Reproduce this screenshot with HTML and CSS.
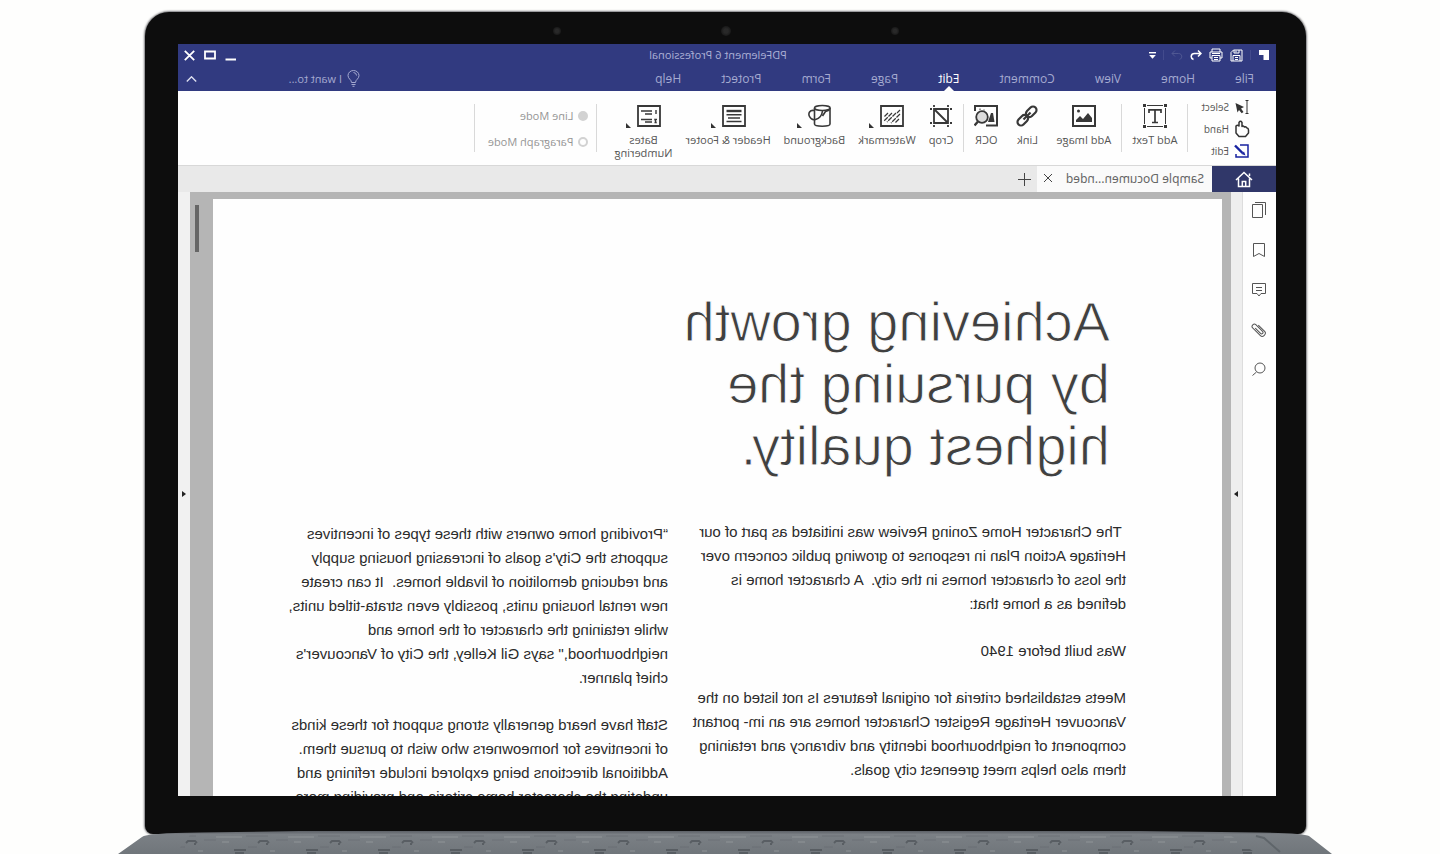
FILE: index.html
```html
<!DOCTYPE html>
<html lang="en">
<head>
<meta charset="utf-8">
<meta name="viewport" content="width=device-width, initial-scale=1">
<title>PDFelement 6 Professional</title>
<link rel="stylesheet" href="styles.css">
</head>
<body>
<main class="laptop">
  <div class="lid">
    <div class="camera"><span class="lens lens-small"></span><span class="lens"></span><span class="lens lens-small"></span></div>
    <div class="screen">
      <header class="titlebar">
        <div class="quick">
          <svg class="logo" width="12" height="12" viewBox="0 0 12 12"><path d="M1 1h10v5H1z M1 6h5.500v5H1z" fill="#fff" stroke="none"/></svg>
          <span class="rule"></span>
          <button aria-label="Save"><svg width="13" height="13" viewBox="0 0 13 13"><path d="M1 1h8.500l2.500 2.500V12H1z M3 12V6.500h7V12 M4 1v3h5V1 M7 1.500v2 M5 8.500h3M5 10.500h3"/></svg></button>
          <button aria-label="Print"><svg width="14" height="14" viewBox="0 0 14 14"><path d="M3 4V1h8v3 M3 10H1V4h12v6h-2 M3 7.500h8V13H3z M5 9.500h4M5 11.500h4 M3 5.500h8"/></svg></button>
          <button aria-label="Redo"><svg width="12" height="12" viewBox="0 0 12 12"><path d="M8 1.500 11 4.500 8 7.500 M11 4.500H4.500C.5 4.500.2 9.500 3.500 10.500" stroke-width="1.500" transform="translate(12 0) scale(-1 1)"/></svg></button>
          <button class="faint" aria-label="Undo"><svg width="12" height="12" viewBox="0 0 12 12"><path d="M8 1.500 11 4.500 8 7.500 M11 4.500H4.500C.5 4.500.2 9.500 3.500 10.500"/></svg></button>
          <span class="rule"></span>
          <button aria-label="Customize"><svg width="7" height="7" viewBox="0 0 7 7"><path d="M0 .7h7" stroke-width="1.400"/><path d="M.2 3h6.600L3.500 6.800z" fill="#fff" stroke="none"/></svg></button>
        </div>
        <h1 class="app-title">PDFelement 6 Professional</h1>
        <div class="window-controls">
          <button aria-label="Minimize"><svg width="11" height="11" viewBox="0 0 11 11"><path d="M0 9.500h10.500" stroke-width="2"/></svg></button>
          <button aria-label="Maximize"><svg width="12" height="10" viewBox="0 0 12 10"><path d="M1 1.500h10v7H1z" stroke-width="1.800"/></svg></button>
          <button aria-label="Close"><svg width="11" height="11" viewBox="0 0 11 11"><path d="M.8.8l9.400 9.400M10.200.8.8 10.200" stroke-width="1.800"/></svg></button>
        </div>
      </header>

      <nav class="menu">
        <a href="#">File</a><a href="#">Home</a><a href="#">View</a><a href="#">Comment</a><a href="#" class="active">Edit</a><a href="#">Page</a><a href="#">Form</a><a href="#">Protect</a><a href="#">Help</a>
        <label class="wish">
          <svg width="13" height="17" viewBox="0 0 13 17"><path d="M4.500 12.500C4.500 9.500 1 9 1 5.500a5.500 5 0 0 1 11 0C12 9 8.500 9.500 8.500 12.500z M4.500 14.500h4 M5.500 16.300h2 M6.500 2.500q-3 .2-3 3"/></svg>
          <input type="text" placeholder="I want to..." aria-label="I want to">
        </label>
        <button class="collapse" aria-label="Collapse ribbon"><svg width="11" height="6" viewBox="0 0 11 6"><path d="M.8 5.500 5.500.8l4.700 4.700" stroke-width="1.400"/></svg></button>
      </nav>

      <section class="ribbon">
        <div class="group modes">
          <button><svg width="16" height="14" viewBox="0 0 16 14"><path d="M1.500.5h3M1.500 13.500h3M3 .5v13" stroke="#333"/><path d="M14.500 2 6 6l3 1.500L6.500 11l1.800 1.200L11 9l1.500 2.500z" fill="#333" stroke="none" transform="translate(0 1)"/></svg>Select</button>
          <button><svg width="16" height="18" viewBox="0 0 16 18"><path d="M4.500 16.500h6.500l3-3.500V6q-1.500-1.500-3 0V2.500Q9.500.2 8 2.500v4Q6.800 5.300 5.600 7 4.300 6.200 3.300 7.800 1.500 8 1.500 10v3z" stroke="#333" stroke-width="1.500" stroke-linejoin="round"/></svg>Hand</button>
          <button><svg width="16" height="16" viewBox="0 0 16 16"><path d="M10 2H2v12h12v-3" stroke="#1722a0" stroke-width="1.500"/><path d="M15 2.500 7.500 10" stroke="#1722a0" stroke-width="2.400"/><path d="M4.500 12.500l1.500-4 2.500 2.500z" fill="#1722a0" stroke="none"/></svg>Edit</button>
        </div>
        <div class="group">
          <button class="tool"><svg width="24" height="24" viewBox="0 0 24 24"><path d="M4 1.500h16M4 22.500h16M1.500 4v16M22.500 4v16" stroke-width="1"/><path d="M0 0h3v3H0zM21 0h3v3h-3zM0 21h3v3H0zM21 21h3v3h-3z" fill="#383838" stroke="none"/><path d="M6 9V5.800h12V9M12 6v12.500M9 18.500h6" stroke-width="1.700"/></svg><span>Add Text</span></button>
        </div>
        <div class="group wide">
          <button class="tool"><svg width="24" height="24" viewBox="0 0 24 24"><path d="M1 2h22v20H1z" stroke-width="2"/><path d="M4 18v-2l4-4 3 3 5-6 4 5v4z" fill="#383838" stroke="none" transform="translate(24 0) scale(-1 1)"/><circle cx="17.500" cy="7" r="1.500" fill="#383838" stroke="none"/></svg><span>Add Image</span></button>
          <button class="tool"><svg width="24" height="24" viewBox="0 0 24 24"><g transform="rotate(45 12 12)" stroke-width="2.200"><rect x="0" y="8.500" width="12" height="7" rx="3.500"/><rect x="12" y="8.500" width="12" height="7" rx="3.500"/><path d="M7 12h10"/></g></svg><span>Link</span></button>
          <button class="tool"><svg width="24" height="24" viewBox="0 0 24 24"><path d="M12 21.500H1V2h22v5" stroke-width="2"/><path d="M3.500 18l1.500-9h2l3 9z" fill="#383838" stroke="none"/><circle cx="16" cy="13" r="5.800" fill="#ddd" stroke-width="1.800"/><path d="M20 17.500 23.500 21.500" stroke-width="2.400"/><path d="M18 6V4.500M14 6.500v-1"/></svg><span>OCR</span></button>
        </div>
        <div class="group last">
          <button class="tool"><svg width="24" height="24" viewBox="0 0 24 24"><path d="M5 5h14v14H5zM5 19 19 5" stroke-width="1.800"/><path d="M1 5h2M5 1v2M19 1v2M21 5h2M1 19h2M21 19h2M5 21v2M19 21v2" stroke-width="1.800"/></svg><span>Crop</span></button>
          <button class="tool"><i><svg width="24" height="24" viewBox="0 0 24 24"><path d="M1 2h22v20H1z" stroke-width="1.800"/><path d="M4 6l3 3M4 10l9 9M8 9l9 9M12 9l8 8M16 9l4 4M5 15l4 4" stroke-width="1.200" stroke-dasharray="5 1"/></svg><b class="caret"></b></i><span>Watermark</span></button>
          <button class="tool"><i><svg width="24" height="24" viewBox="0 0 24 24"><path d="M2 4v16c0 3 15.500 3 15.500 0V4" stroke-width="1.600"/><ellipse cx="9.700" cy="4" rx="7.800" ry="2.500" stroke-width="1.600"/><path d="M2.500 6l4 1.500 3 4.500M17.500 6.500c5-1 6.500 3 5 6-1.500 3-4 3.500-6 3-4-1-6.500-4.500-7-8.500" stroke-width="1.600"/></svg><b class="caret"></b></i><span>Background</span></button>
          <button class="tool"><i><svg width="24" height="24" viewBox="0 0 24 24"><path d="M1 2h22v20H1z" stroke-width="1.800"/><path d="M4.500 7h15" stroke-width="2.400"/><path d="M4.500 10.800h15M6 14h12M4.500 17.500h15" stroke-width="1.400"/></svg><b class="caret"></b></i><span>Header &amp; Footer</span></button>
          <button class="tool"><i><svg width="24" height="24" viewBox="0 0 24 24"><path d="M1 2h22v20H1z" stroke-width="1.800"/><path d="M5 6v4M4 15.500h2l-1 3h1.500M9 7h11M9 10h7M9 15.500h11M9 18h7" stroke-width="1.400"/></svg><b class="caret"></b></i><span>Bates<br>Numbering</span></button>
        </div>
        <fieldset class="group radios">
          <label><input type="radio" name="mode" checked disabled>Line Mode</label>
          <label><input type="radio" name="mode" disabled>Paragraph Mode</label>
        </fieldset>
      </section>

      <div class="tabs">
        <button class="home" aria-label="Home"><svg width="18" height="17" viewBox="0 0 18 17"><path d="M1 9 9 1.500 17 9M3.500 7.500V15.500h11V7.500M7.300 15.500V10.500h3.400v5M3.500 5V2.500"/></svg></button>
        <div class="tab"><a href="#">Sample Documen...nded</a><button aria-label="Close tab"><svg width="10" height="10" viewBox="0 0 10 10"><path d="M1 1l8 8M9 1 1 9"/></svg></button></div>
        <button class="add" aria-label="New tab"><svg width="13" height="13" viewBox="0 0 13 13"><path d="M0 6.500h13M6.500 0v13"/></svg></button>
      </div>

      <div class="workspace">
        <aside class="side">
          <button aria-label="Pages"><svg width="16" height="18" viewBox="0 0 16 18"><path d="M4.500 3.500h10v13h-10zM1.500 14V1.500H12"/></svg></button>
          <button aria-label="Bookmarks"><svg width="16" height="18" viewBox="0 0 16 18"><path d="M2.500 2.500h11v13L8 12.500l-5.500 3z"/></svg></button>
          <button aria-label="Comments"><svg width="16" height="18" viewBox="0 0 16 18"><path d="M1.500 2.500h13v10H10L8 15l-2-2.500H1.500zM5 6.500h6M5 9.500h6"/></svg></button>
          <button aria-label="Attachments"><svg width="16" height="18" viewBox="0 0 16 18"><g transform="rotate(45 8 9)"><path d="M5 5v9q0 2.500 3 2.500t3-2.500V3q0-2-2.200-2T6.500 3v9.500q0 1.500 1.400 1.500t1.400-1.500V5"/></g></svg></button>
          <button aria-label="Search"><svg width="16" height="18" viewBox="0 0 16 18"><circle cx="7" cy="7" r="5"/><path d="M10.500 11l4 3.500"/></svg></button>
        </aside>
        <button class="gutter" aria-label="Toggle sidebar"><b class="tri"></b></button>
        <div class="canvas">
          <article class="page">
            <h2>Achieving growth<br>by pursuing the<br>highest quality.</h2>
            <div class="columns">
              <div class="column">
                <p>&nbsp;The Character Home Zoning Review was initiated as part of our<br>Heritage Action Plan in response to growing public concern over<br>the loss of character homes in the city.&nbsp; A character home is<br>defined as a home that:</p>
                <p>Was built before 1940</p>
                <p>Meets established criteria for original features Is not listed on the<br>Vancouver Heritage Register Character homes are an im- portant<br>component of neighbourhood identity and vibrancy and retaining<br>them also helps meet greenest city goals.</p>
              </div>
              <div class="column second">
                <p>“Providing home owners with these types of incentives<br>supports the City's goals of increasing housing supply<br>and reducing demolition of livable homes.&nbsp; It can create<br>new rental housing units, possibly even strata-titled units,<br>while retaining the character of the home and<br>neighbourhood," says Gil Kelley, the City of Vancouver's<br>chief planner.</p>
                <p>Staff have heard generally strong support for these kinds<br>of incentives for homeowners who wish to pursue them.<br>Additional directions being explored include refining and<br>updating the character home criteria and providing more</p>
              </div>
            </div>
          </article>
          <div class="scroll"><span class="thumb"></span></div>
        </div>
        <button class="gutter right" aria-label="Toggle panel"><b class="tri back"></b></button>
      </div>
    </div>
  </div>
  <svg class="base" viewBox="0 0 1440 24" preserveAspectRatio="none">
    <defs>
      <linearGradient id="metal" x1="0" y1="0" x2="0" y2="1"><stop offset="0" stop-color="#5c6066"/><stop offset=".15" stop-color="#7b8085"/><stop offset="1" stop-color="#70767b"/></linearGradient>
      <pattern id="keys" width="72" height="24" patternUnits="userSpaceOnUse">
        <path d="M42 13l2-2h7l2 2M51 13v2M18 20h12M19 23h9" fill="none" stroke="#4e5459" stroke-width="2" opacity=".75"/>
        <path d="M6 12h7M54 21h5M0 7h26" stroke="#969b9e" stroke-width="2" opacity=".4"/>
        <path d="M30 6h22M60 10h12M32 17h9" stroke="#62686d" stroke-width="1" opacity=".6"/>
      </pattern>
    </defs>
    <path d="M118 24 142 7Q146 3 200 2.500L300 1H1140L1260 2.500Q1304 3 1309 6L1332 24z" fill="url(#metal)"/>
    <path d="M175 24 190 5H1230L1257 24z" fill="url(#keys)"/>
    <path d="M1256 6l8 2 16 14" fill="none" stroke="#5f656a" stroke-width="2"/>
  </svg>
</main>
</body>
</html>
```
FILE: styles.css
```css
* { box-sizing: border-box; }
body { margin: 0; background: #fefefd; font-family: "Open Sans", "Noto Sans", sans-serif; }
button { margin: 0; padding: 0; border: 0; background: none; color: inherit; font: inherit; }
a { color: inherit; text-decoration: none; }
svg { display: block; flex: none; fill: none; stroke: currentColor; }

.laptop { display: flex; flex-direction: column; height: 100vh; min-height: 400px; padding-top: 12px; overflow: hidden; }
.lid { position: relative; display: flex; flex: 1; min-height: 0; margin: 0 134px 0 145px; padding: 32px 30px 38px 33px; background: #0d0d0d; border-radius: 24px 24px 8px 8px; box-shadow: 0 0 2px 1px #77777a; }
.camera { position: absolute; top: 14px; left: 0; right: 0; display: flex; justify-content: center; align-items: center; gap: 160px; }
.lens { width: 10px; height: 10px; border-radius: 50%; background: radial-gradient(#292929 30%, #0d0d0d); }
.lens-small { width: 8px; height: 8px; }
.base { position: relative; width: 100%; height: 24px; margin-top: -4px; stroke: none; }

/* The display is shown as a mirror image */
.screen { display: flex; flex: 1; flex-direction: column; min-width: 0; overflow: hidden; background: #fefefe; transform: scaleX(-1); }

.titlebar { display: grid; grid-template-columns: 1fr auto 1fr; align-items: center; height: 22px; padding: 0 6px; background: #313a80; color: #fff; }
.quick { display: flex; align-items: center; gap: 7px; }
.quick .rule { width: 1px; height: 10px; background: #434b8d; }
.faint { opacity: .15; }
.app-title { margin: 0; padding-left: 18px; font-size: 11px; font-weight: 400; line-height: 22px; color: #adb1d6; }
.window-controls { display: flex; align-items: center; justify-content: flex-end; gap: 9px; }

.menu { display: flex; align-items: center; gap: 40px; height: 25px; padding: 0 8px 0 22px; background: #313a80; color: #a5aad0; font-size: 12px; }
.menu a { position: relative; line-height: 25px; }
.menu .active { color: #fff; }
.menu .active::after { content: ""; position: absolute; bottom: 0; left: 50%; margin-left: -5px; border: 5px solid transparent; border-top: 0; border-bottom-color: #fefefe; }
.wish { display: flex; align-items: center; gap: 5px; margin-left: auto; }
.wish input { width: 100px; padding: 0; border: 0; background: none; color: inherit; font: inherit; font-size: 11px; }
.wish input::placeholder { color: inherit; opacity: 1; }
.collapse { margin-left: 5px; color: #dfe1f0; }

.ribbon { display: flex; height: 75px; padding-top: 13px; border-bottom: 1px solid #d8d8d8; color: #555; font-size: 11px; }
.group { display: flex; gap: 13px; height: 48px; margin: 0; padding: 0 10px; border: 0; border-right: 1px solid #d9d9d9; }
.group.wide { gap: 17px; }
.group.last { padding-right: 17px; }
.modes { flex-direction: column; gap: 0; padding: 0 13px 0 26px; font-size: 10px; }
.modes button { display: flex; align-items: center; gap: 5px; height: 22px; flex: none; margin: -8px 0 8px; }
.tool { display: flex; flex-direction: column; align-items: center; gap: 5px; height: 56px; line-height: 13px; white-space: nowrap; }
.tool svg { color: #383838; }
.tool i { display: flex; align-items: flex-end; gap: 6px; }
.caret { border: 5px solid transparent; border-width: 5px 0 0 5px; border-left-color: #333; transform: scaleX(-1); }
.radios { flex-direction: column; justify-content: space-between; gap: 0; padding: 4px 13px 2px 8px; color: #959595; }
.radios label { display: flex; align-items: center; gap: 5px; line-height: 16px; }
.radios input { width: 10px; height: 10px; margin: 0; appearance: none; border: 2px solid #d2d2d2; border-radius: 50%; }
.radios input:checked { background: #d2d2d2; }

.tabs { display: flex; height: 26px; background: #e9e9e9; color: #444; font-family: "Noto Sans", sans-serif; font-size: 12px; }
.home { display: grid; place-items: center; width: 64px; background: #303769; color: #fff; }
.home svg { stroke-width: 1.500; }
.tab { display: flex; align-items: center; justify-content: space-between; width: 175px; padding: 0 6px 2px 8px; background: #fafafa; }
.tab a { color: #666; }
.add { padding: 0 6px; }

.workspace { display: flex; flex: 1; min-height: 0; }
.side { display: flex; flex-direction: column; align-items: center; gap: 22px; width: 34px; padding-top: 9px; color: #555; border-right: 1px solid #ddd; }
.gutter { display: flex; align-items: center; justify-content: center; width: 11px; background: #eee; }
.gutter.right { width: 12px; background: #f1f1f1; }
.tri { border: 3px solid transparent; border-right-width: 0; border-left: 4px solid #222; }
.tri.back { transform: rotate(180deg); }
.canvas { display: flex; flex: 1; min-width: 0; padding: 7px 0 0 9px; background: #b5b5b5; }
.page { flex: 1; min-width: 0; height: 100%; overflow: hidden; padding: 92px 96px 0; background: #fefefe; color: #2b2b2b; font-family: "Liberation Sans", Arial, sans-serif; }
.page h2 { margin: 0 0 43px 16px; color: #404040; font-size: 56px; font-weight: 400; line-height: 62px; -webkit-text-stroke: 1px #fefefe; }
.columns { display: grid; grid-template-columns: 458px 1fr; font-size: 15px; line-height: 24px; white-space: nowrap; }
.column p { margin: 0 0 23px; }
.second { padding-top: 2px; }
.scroll { width: 23px; padding: 6px 0 0 14px; }
.thumb { display: block; width: 4px; height: 47px; background: #666; }
```
